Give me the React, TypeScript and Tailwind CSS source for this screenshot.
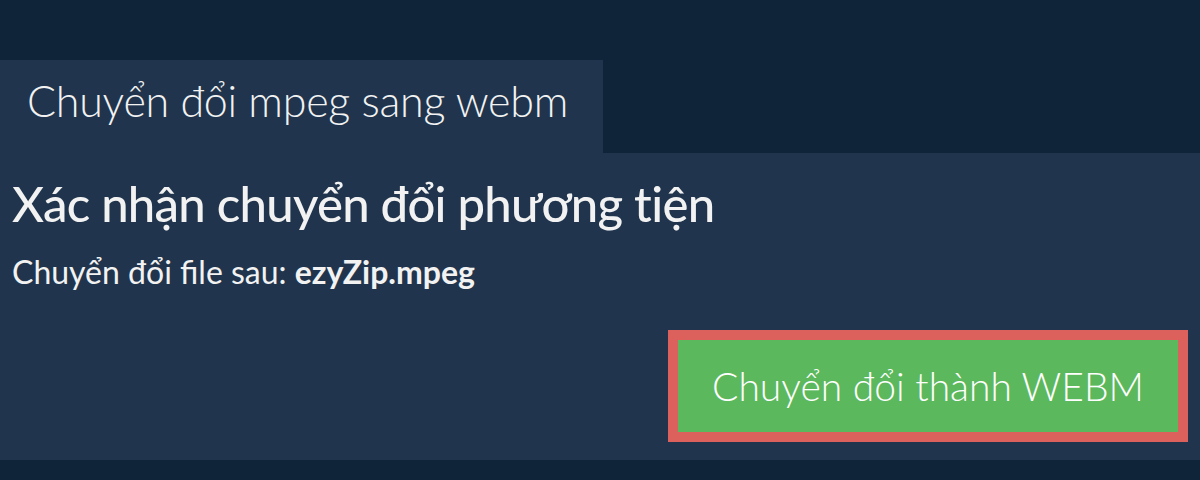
import React from 'react';

const App = () => {
  return (
    <div className="w-[1200px] h-[480px] bg-[#0f2339] flex flex-col font-['Lato','Noto_Sans',sans-serif] text-[#f2f2f2]">
      <div className="h-[60px]" />
      <div className="w-[603px] h-[93px] bg-[#20354d] pl-[27px] pt-[15px]">
        <h1 className="text-[43px] font-light leading-[1.2] tracking-[-0.25px]">Chuyển đổi mpeg sang webm</h1>
      </div>
      <section className="h-[307px] bg-[#20354d] px-[12px] pt-[21px] flex flex-col">
        <h2 className="text-[49px] font-medium leading-[59px] tracking-[-0.7px]">Xác nhận chuyển đổi phương tiện</h2>
        <p className="text-[32px] mt-[20px] leading-[38px]">
          Chuyển đổi file sau: <span className="font-bold">ezyZip.mpeg</span>
        </p>
        <div className="flex justify-end mt-[39px]">
          <button className="w-[520px] h-[112px] border-[10px] border-[#dc605c] bg-[#5cb85c] text-white text-[39px] font-light">
            Chuyển đổi thành WEBM
          </button>
        </div>
      </section>
    </div>
  );
};

export default App;
